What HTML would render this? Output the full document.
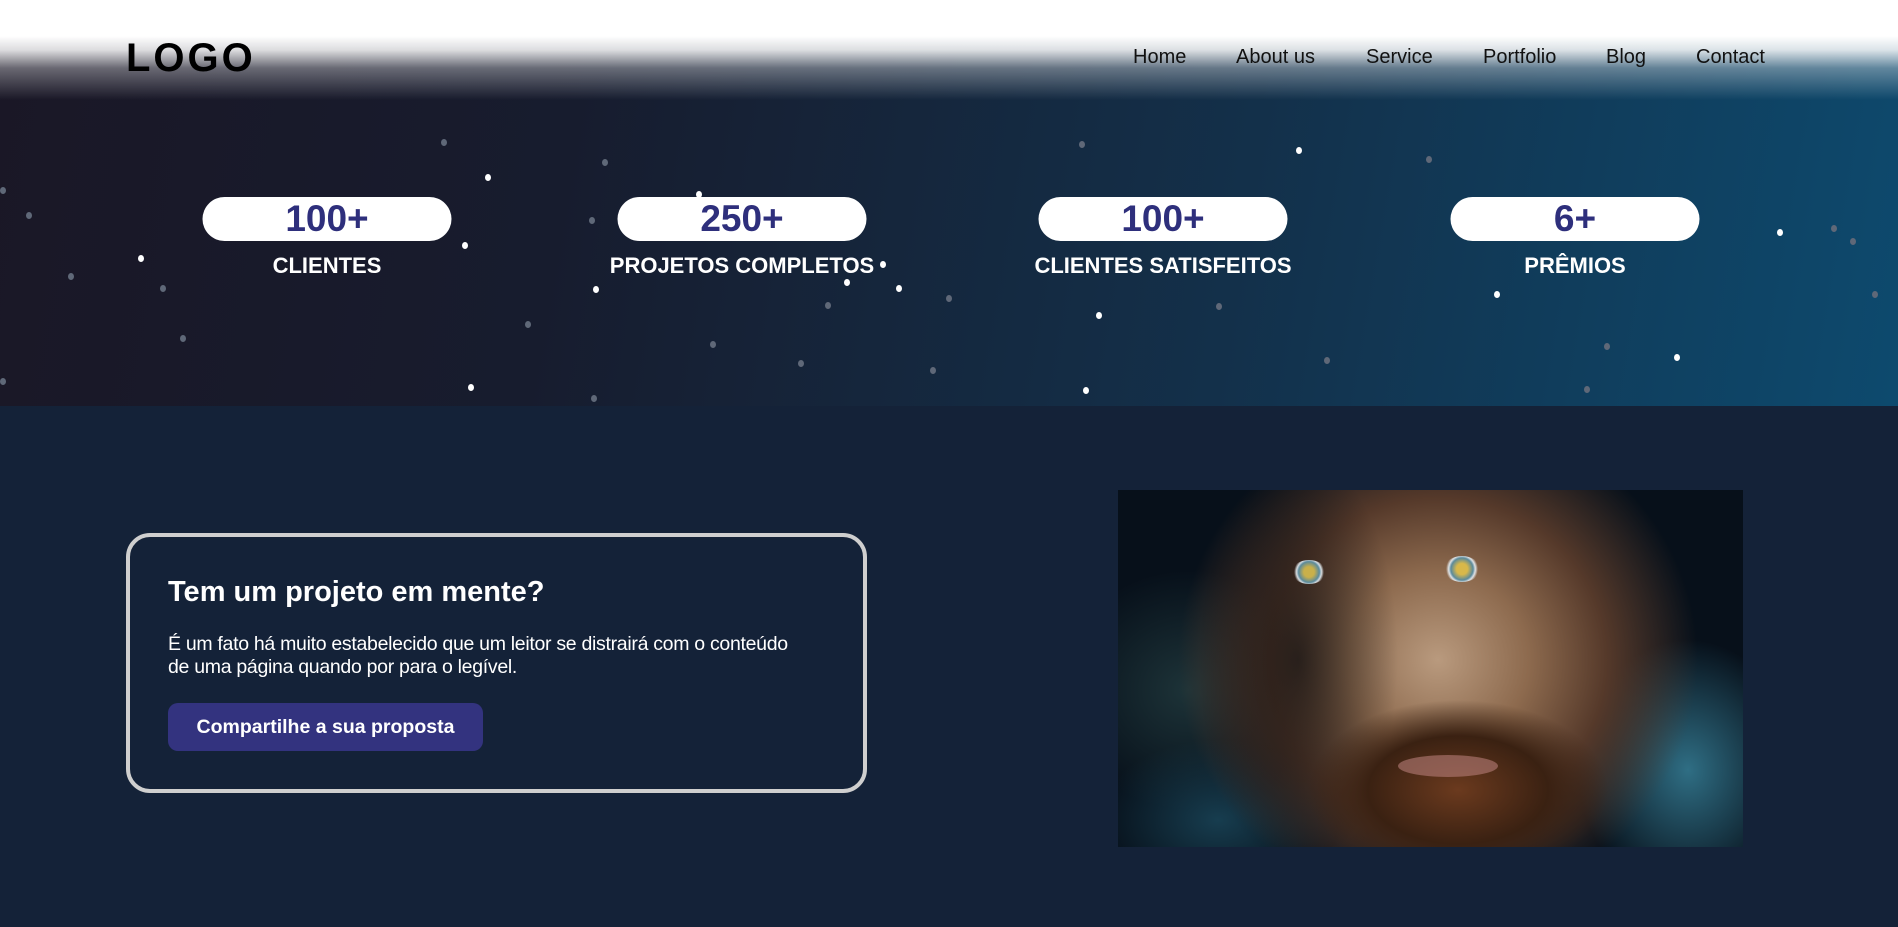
<!DOCTYPE html>
<html><head><meta charset="utf-8"><style>
*{margin:0;padding:0;box-sizing:border-box}
body{width:1898px;height:927px;overflow:hidden;font-family:"Liberation Sans",Arial,sans-serif;background:#142238;position:relative}
.hero{position:absolute;left:0;top:0;width:1898px;height:406px;background:linear-gradient(100deg,#1a1726 0%,#171c2e 30%,#13304a 65%,#0d4a6e 100%)}
.fade{position:absolute;left:0;top:0;width:1898px;height:100px;background:linear-gradient(180deg,#fff 0%,#fff 36%,rgba(255,255,255,.85) 50%,rgba(255,255,255,.35) 68%,rgba(255,255,255,0) 100%)}
.logo{position:absolute;left:126px;top:36px;font-size:40px;font-weight:bold;letter-spacing:3px;color:#000}
.nav{position:absolute;top:46px;font-size:20px;color:#111}
.pill{position:absolute;top:197px;width:249px;height:44px;background:#fff;border-radius:22px;text-align:center;font-size:37px;font-weight:bold;color:#2e2f7c;line-height:44px;transform:translateX(-50%)}
.lab{position:absolute;top:253px;font-size:22px;font-weight:bold;color:#fff;white-space:nowrap;transform:translateX(-50%)}
.s{position:absolute;width:6px;height:7px;border-radius:50%;background:#fff}
.d{position:absolute;width:6px;height:7px;border-radius:50%;background:#5f6878}
.card{position:absolute;left:126px;top:533px;width:741px;height:260px;border:4px solid #cfcfcf;border-radius:24px}
.card h2{position:absolute;left:38px;top:39px;font-size:29px;color:#fff}
.card p{position:absolute;left:38px;top:96px;width:665px;font-size:19.5px;line-height:23px;color:#fff;letter-spacing:-0.3px}
.btn{position:absolute;left:38px;top:166px;width:315px;height:48px;background:#33337f;border-radius:10px;color:#fff;font-size:19.5px;font-weight:bold;line-height:48px;text-align:center}
.img{position:absolute;left:1118px;top:490px;width:625px;height:357px;overflow:hidden;background:#07101a}
.img div{position:absolute;border-radius:50%}
</style></head><body>
<div class="hero"></div>
<div class="fade"></div>
<div class="logo">LOGO</div>
<div class="nav" style="left:1133px">Home</div>
<div class="nav" style="left:1236px">About us</div>
<div class="nav" style="left:1366px">Service</div>
<div class="nav" style="left:1483px">Portfolio</div>
<div class="nav" style="left:1606px">Blog</div>
<div class="nav" style="left:1696px">Contact</div>

<div class="s" style="left:485px;top:174px"></div><div class="s" style="left:138px;top:255px"></div><div class="s" style="left:462px;top:242px"></div><div class="s" style="left:593px;top:286px"></div><div class="s" style="left:896px;top:285px"></div><div class="s" style="left:844px;top:279px"></div><div class="s" style="left:880px;top:261px"></div><div class="s" style="left:696px;top:191px"></div><div class="s" style="left:468px;top:384px"></div><div class="s" style="left:1083px;top:387px"></div><div class="s" style="left:1096px;top:312px"></div><div class="s" style="left:1296px;top:147px"></div><div class="s" style="left:1494px;top:291px"></div><div class="s" style="left:1674px;top:354px"></div><div class="s" style="left:1777px;top:229px"></div>
<div class="d" style="left:441px;top:139px"></div><div class="d" style="left:602px;top:159px"></div><div class="d" style="left:0px;top:187px"></div><div class="d" style="left:26px;top:212px"></div><div class="d" style="left:68px;top:273px"></div><div class="d" style="left:160px;top:285px"></div><div class="d" style="left:180px;top:335px"></div><div class="d" style="left:525px;top:321px"></div><div class="d" style="left:589px;top:217px"></div><div class="d" style="left:710px;top:341px"></div><div class="d" style="left:798px;top:360px"></div><div class="d" style="left:825px;top:302px"></div><div class="d" style="left:930px;top:367px"></div><div class="d" style="left:946px;top:295px"></div><div class="d" style="left:1216px;top:303px"></div><div class="d" style="left:1324px;top:357px"></div><div class="d" style="left:1426px;top:156px"></div><div class="d" style="left:1604px;top:343px"></div><div class="d" style="left:1584px;top:386px"></div><div class="d" style="left:1831px;top:225px"></div><div class="d" style="left:1850px;top:238px"></div><div class="d" style="left:1872px;top:291px"></div><div class="d" style="left:0px;top:378px"></div><div class="d" style="left:591px;top:395px"></div><div class="d" style="left:1079px;top:141px"></div>

<div class="pill" style="left:327px">100+</div><div class="lab" style="left:327px">CLIENTES</div>
<div class="pill" style="left:742px">250+</div><div class="lab" style="left:742px">PROJETOS COMPLETOS</div>
<div class="pill" style="left:1163px">100+</div><div class="lab" style="left:1163px">CLIENTES SATISFEITOS</div>
<div class="pill" style="left:1575px">6+</div><div class="lab" style="left:1575px">PRÊMIOS</div>

<div class="card">
<h2>Tem um projeto em mente?</h2>
<p>É um fato há muito estabelecido que um leitor se distrairá com o conteúdo<br>de uma página quando por para o legível.</p>
<div class="btn">Compartilhe a sua proposta</div>
</div>

<div class="img">
<div style="left:-60px;top:80px;width:260px;height:240px;background:radial-gradient(closest-side,#1d3338,rgba(7,16,26,0))"></div>
<div style="left:460px;top:150px;width:220px;height:260px;background:radial-gradient(closest-side,#2f6e84,rgba(7,16,26,0))"></div>
<div style="left:-20px;top:250px;width:240px;height:160px;background:radial-gradient(closest-side,#173d4f,rgba(7,16,26,0))"></div>
<div style="left:60px;top:-80px;width:520px;height:500px;background:radial-gradient(closest-side,#b99a7e 0%,#8d6a4e 35%,#55392a 65%,rgba(7,16,26,0) 100%)"></div>
<div style="left:80px;top:-40px;width:200px;height:420px;background:radial-gradient(closest-side,rgba(5,8,12,.65),rgba(5,8,12,0))"></div>
<div style="left:190px;top:210px;width:300px;height:180px;background:radial-gradient(closest-side,#6b3a1e,#3a2112 60%,rgba(30,20,15,0))"></div>
<div style="left:280px;top:265px;width:100px;height:22px;background:#b57d78;opacity:.6"></div>
<div style="left:174px;top:70px;width:34px;height:24px;background:radial-gradient(circle,#c9b04a 0 25%,#5a8a9c 50%,#d8dde0 60%,rgba(0,0,0,0) 72%)"></div>
<div style="left:326px;top:66px;width:36px;height:26px;background:radial-gradient(circle,#d8b84a 0 25%,#5a8a9c 50%,#e0e3e5 60%,rgba(0,0,0,0) 72%)"></div>
</div>
</body></html>
